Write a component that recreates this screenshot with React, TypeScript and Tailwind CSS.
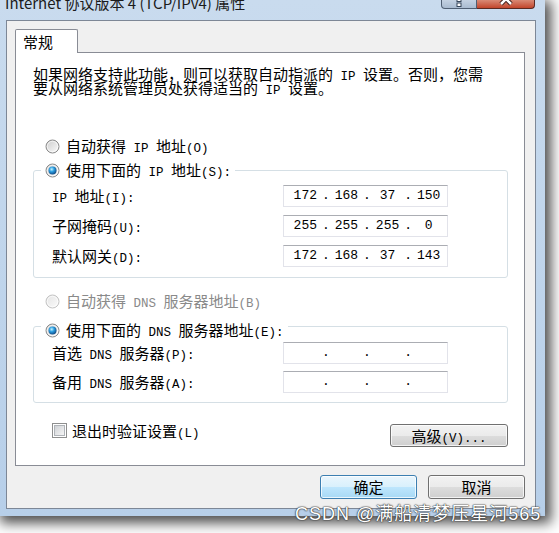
import React from 'react';

const CJK = "font-['Noto_Sans_CJK_SC',sans-serif]";

function L({ children }: { children: React.ReactNode }) {
  return <span className="whitespace-pre font-['Liberation_Mono','Noto_Sans_CJK_SC',monospace] text-[12.5px] leading-[0px]">{children}</span>;
}

function Radio({ id, checked = false, disabled = false }: { id: string; checked?: boolean; disabled?: boolean }) {
  return (
    <svg width="15" height="15" viewBox="0 0 15 15" className="shrink-0">
      <defs>
        <linearGradient id={`rf-${id}`} x1="0" y1="0" x2="1" y2="1">
          <stop offset="0" stopColor={disabled ? '#e4e4e4' : '#cbcbcb'} />
          <stop offset="1" stopColor={disabled ? '#fbfbfb' : '#fdfdfd'} />
        </linearGradient>
        <radialGradient id={`rd-${id}`} cx="0.4" cy="0.35" r="0.75">
          <stop offset="0" stopColor="#c4f3ff" />
          <stop offset="0.4" stopColor="#2b9de0" />
          <stop offset="1" stopColor="#0b3870" />
        </radialGradient>
      </defs>
      <circle cx="7.5" cy="7.5" r="6.5" fill={`url(#rf-${id})`} stroke={disabled ? '#c4c4c4' : '#8b8b8b'} />
      <circle cx="7.5" cy="7.5" r="5.2" fill="none" stroke="#ffffff" strokeOpacity="0.6" />
      {checked && <circle cx="7.5" cy="7.5" r="4" fill={`url(#rd-${id})`} />}
    </svg>
  );
}

function Checkbox() {
  return (
    <svg width="15" height="15" viewBox="0 0 15 15" className="shrink-0">
      <defs>
        <linearGradient id="cbf" x1="0" y1="0" x2="1" y2="1">
          <stop offset="0" stopColor="#cdd0d4" />
          <stop offset="1" stopColor="#f7f7f7" />
        </linearGradient>
      </defs>
      <rect x="0.5" y="0.5" width="14" height="14" fill="#ffffff" stroke="#8e8f8f" />
      <rect x="2.5" y="2.5" width="10" height="10" fill="url(#cbf)" stroke="#b0b4b9" />
    </svg>
  );
}

function IpBox({ parts }: { parts: string[] }) {
  return (
    <div className="flex h-[22px] w-[165px] items-center border border-[#e2e3ea] border-t-[#abadb3] bg-white pl-[3px] font-['Liberation_Mono',monospace] text-[13px] text-black">
      {[0, 1, 2, 3].map((i) => (
        <React.Fragment key={i}>
          {i > 0 && <span className="flex w-[4.5px] justify-center">.</span>}
          <span className="w-[37px] text-center">{parts[i] ?? ''}</span>
        </React.Fragment>
      ))}
    </div>
  );
}

function Button({ children, primary = false, className = '' }: { children: React.ReactNode; primary?: boolean; className?: string }) {
  const look = primary
    ? 'border-[#3c7fb1] bg-[linear-gradient(#eaf6fd_0%,#d9f0fc_50%,#bee6fd_50%,#a7d9f5_100%)]'
    : 'border-[#707070] bg-[linear-gradient(#f2f2f2_0%,#ebebeb_50%,#dddddd_50%,#cfcfcf_100%)]';
  return (
    <div className={`flex items-center justify-center rounded-[3px] border shadow-[inset_0_0_0_1px_rgba(255,255,255,0.75)] ${look} ${className}`}>
      {children}
    </div>
  );
}

function Field({ label, parts }: { label: React.ReactNode; parts: string[] }) {
  return (
    <div className="flex h-[22px] items-center">
      <div className="w-[231px] whitespace-nowrap leading-[16px]">{label}</div>
      <IpBox parts={parts} />
    </div>
  );
}

export default function App() {
  return (
    <div className="relative h-[533px] w-[559px] overflow-hidden bg-white">
      <div className="flex h-[516px] w-[545px] flex-col bg-[linear-gradient(180deg,#c9dbee,#b7cfe9)] pb-[7px] pl-[6px] pr-[9px] shadow-[3px_4px_12px_3px_rgba(0,0,0,0.7)]">
        {/* title bar */}
        <div className="flex h-[20px] shrink-0 justify-between">
          <div className={`-ml-[1px] -mt-[6px] whitespace-nowrap text-[15px] leading-[18px] text-[#1b1b1b] ${CJK}`}>
            Internet 协议版本 4 (TCP/IPv4) 属性
          </div>
          <div className="mr-[1px] flex h-[9px]">
            <div className="flex w-[36px] justify-center rounded-bl-[4px] border border-t-0 border-[#4f5f73] bg-[linear-gradient(#c4d2e2,#a9bbd0)]">
              <svg width="10" height="8" viewBox="0 0 10 8">
                <rect x="3" y="-2" width="4" height="3.5" fill="#ffffff" stroke="#36465a" />
                <rect x="3" y="3" width="4" height="3.5" fill="#ffffff" stroke="#36465a" />
              </svg>
            </div>
            <div className="flex w-[58px] justify-center rounded-br-[4px] border border-l-0 border-t-0 border-[#5b2a22] bg-[linear-gradient(#d98a75,#c2462c)]">
              <svg width="16" height="8" viewBox="0 0 16 8">
                <path d="M3 -6 L8 -1 L13 -6 M3 4 L8 -1 L13 4" stroke="#3a1e1a" strokeWidth="4.5" fill="none" />
                <path d="M3 -6 L8 -1 L13 -6 M3 4 L8 -1 L13 4" stroke="#ffffff" strokeWidth="2.5" fill="none" />
              </svg>
            </div>
          </div>
        </div>

        {/* client area */}
        <div className={`flex flex-1 flex-col border border-[#7d8796] bg-[#f0f0f0] pl-[8px] pr-[10px] pt-[8px] text-[15px] text-black ${CJK}`}>
          <div className="relative z-10 -mb-[1px] flex h-[24px] w-[63px] items-center rounded-t-[2px] border border-b-0 border-[#898c95] bg-white pl-[7px] leading-[16px]">
            常规
          </div>
          <div className="flex h-[414px] flex-col border border-[#898c95] bg-white pl-[17px] pr-[16px]">
            <p className="mt-[14px] whitespace-nowrap leading-[14px]">
              如果网络支持此功能，则可以获取自动指派的<L> IP </L>设置。否则，您需
              <br />
              要从网络系统管理员处获得适当的<L> IP </L>设置。
            </p>

            <div className="ml-[12px] mt-[43px] flex h-[16px] items-center gap-[6px] leading-[16px]">
              <Radio id="r1" />
              <span>自动获得<L> IP </L>地址<L>(O)</L></span>
            </div>

            <fieldset className="mt-[8px] rounded-[3px] border border-[#d5dfe5]">
              <legend className="ml-[7px] px-[4px]">
                <div className="flex h-[16px] items-center gap-[6px] leading-[16px]">
                  <Radio id="r2" checked />
                  <span>使用下面的<L> IP </L>地址<L>(S):</L></span>
                </div>
              </legend>
              <div className="flex flex-col gap-[8px] pb-[10px] pl-[18px] pt-[7px]">
                <Field label={<><L>IP </L>地址<L>(I):</L></>} parts={['172', '168', '37', '150']} />
                <Field label={<>子网掩码<L>(U):</L></>} parts={['255', '255', '255', '0']} />
                <Field label={<>默认网关<L>(D):</L></>} parts={['172', '168', '37', '143']} />
              </div>
            </fieldset>

            <div className="ml-[12px] mt-[15px] flex h-[16px] items-center gap-[6px] leading-[16px] text-[#8a8a8a]">
              <Radio id="r3" disabled />
              <span>自动获得<L> DNS </L>服务器地址<L>(B)</L></span>
            </div>

            <fieldset className="mt-[5px] rounded-[3px] border border-[#d5dfe5]">
              <legend className="ml-[7px] px-[4px] pt-[8px]">
                <div className="flex h-[16px] items-center gap-[6px] leading-[16px]">
                  <Radio id="r4" checked />
                  <span>使用下面的<L> DNS </L>服务器地址<L>(E):</L></span>
                </div>
              </legend>
              <div className="flex flex-col gap-[7px] pb-[9px] pl-[18px] pt-[4px]">
                <Field label={<>首选<L> DNS </L>服务器<L>(P):</L></>} parts={[]} />
                <Field label={<>备用<L> DNS </L>服务器<L>(A):</L></>} parts={[]} />
              </div>
            </fieldset>

            <div className="mt-[21px] flex h-[23px] items-start">
              <div className="-mt-[1px] ml-[19px] flex h-[15px] items-center gap-[5px] leading-[16px]">
                <Checkbox />
                <span>退出时验证设置<L>(L)</L></span>
              </div>
              <Button className="ml-auto h-[23px] w-[118px] leading-[16px]">
                <span>高级<L>(V)...</L></span>
              </Button>
            </div>
          </div>

          <div className="mt-[9px] flex justify-end gap-[11px]">
            <Button primary className="h-[24px] w-[97px] leading-[16px]">确定</Button>
            <Button className="h-[24px] w-[97px] leading-[16px]">取消</Button>
          </div>
        </div>
      </div>

      <div className="absolute left-[295px] top-[504px] whitespace-nowrap font-['Liberation_Sans','Noto_Sans_CJK_SC',sans-serif] text-[18px] leading-[20px] tracking-[1px] text-white [text-shadow:0_0_1px_#333,0_0_1px_#333,0_0_2px_#444]">
        CSDN @满船清梦压星河565
      </div>
    </div>
  );
}
